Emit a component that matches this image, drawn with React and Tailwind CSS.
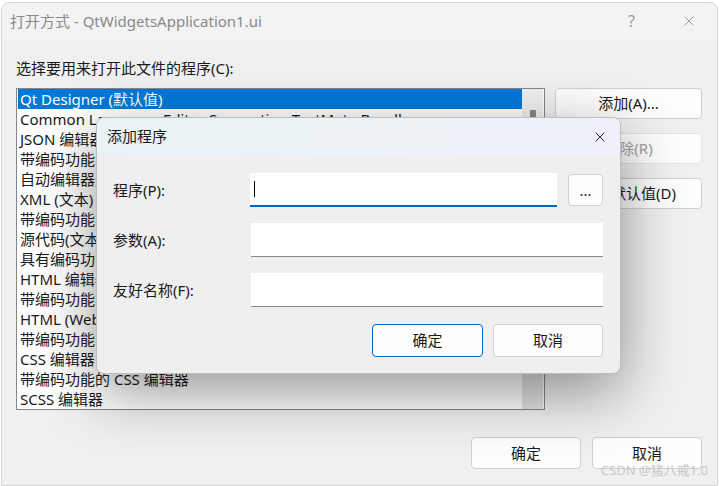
import { X } from "lucide-react";

const items = [
  "Qt Designer (默认值)",
  "Common Language Editor Supporting TextMate Bundles",
  "JSON 编辑器",
  "带编码功能的 JSON 编辑器",
  "自动编辑器选择器 (XML)",
  "XML (文本) 编辑器",
  "带编码功能的 XML (文本) 编辑器",
  "源代码(文本)编辑器",
  "具有编码功能的源代码(文本)编辑器",
  "HTML 编辑器",
  "带编码功能的 HTML 编辑器",
  "HTML (Web 窗体)编辑器",
  "带编码功能的 HTML (Web 窗体)编辑器",
  "CSS 编辑器",
  "带编码功能的 CSS 编辑器",
  "SCSS 编辑器",
];

const font = { fontFamily: '"Segoe UI", "Noto Sans", "Noto Sans CJK SC", sans-serif' };

function WinButton({ children, className = "", disabled = false, focused = false }) {
  return (
    <div
      className={`flex items-center justify-center rounded-[4px] bg-[#fdfdfd] text-[15px] ${
        focused ? "border border-[#0067c0]" : "border border-[#d0d0d0]"
      } ${disabled ? "text-[#a0a0a0] bg-[#f6f6f6] border-[#e3e3e3]" : "text-[#1a1a1a]"} ${className}`}
    >
      {children}
    </div>
  );
}

export default function App() {
  return (
    <div className="relative w-[720px] h-[486px] overflow-hidden bg-white" style={font}>
      {/* Main window */}
      <div className="mt-[2px] ml-[1px] w-[717px] h-[484px] rounded-t-[8px] border border-[#d6d6d6] bg-[#f0f0f0] flex flex-col">
        {/* Title bar */}
        <div className="h-[36px] shrink-0 flex items-center bg-[#f3f3f3] rounded-t-[8px] pl-[8px]">
          <span className="text-[15px] text-[#8a8a8a]">打开方式 - QtWidgetsApplication1.ui</span>
          <span className="ml-auto mr-[46px] text-[16px] text-[#9a9a9a]">?</span>
          <X className="w-[16px] h-[16px] text-[#8a8a8a] mr-[20px]" strokeWidth={1.2} />
        </div>

        {/* Body */}
        <div className="flex flex-col pl-[14px] pt-[19px]">
          <div className="h-[20px] leading-[20px] text-[15px] text-[#1a1a1a]">选择要用来打开此文件的程序(C):</div>

          <div className="flex mt-[10px]">
            <div className="w-[529px] h-[322px] border border-[#828790] bg-white flex px-[1px]">
              <div className="flex-1 overflow-hidden">
                {items.map((t, i) => (
                  <div
                    key={i}
                    className={`h-[20px] leading-[20px] pl-[2px] text-[15px] whitespace-nowrap ${
                      i === 0 ? "bg-[#0078d7] text-white" : "text-[#1a1a1a]"
                    }`}
                  >
                    {t}
                  </div>
                ))}
              </div>
              <div className="w-[21px] bg-[#f0f0f0] flex flex-col items-center">
                <div className="mt-[21px] w-[6px] h-[9px] bg-[#8a8a8a]" />
                <div className="mt-auto w-full h-[35px] bg-[#e3e3e3]" />
              </div>
            </div>

            <div className="ml-[10px] flex flex-col w-[147px]">
              <WinButton className="h-[31px]">添加(A)...</WinButton>
              <WinButton className="h-[31px] mt-[14px]" disabled>
                移除(R)
              </WinButton>
              <WinButton className="h-[31px] mt-[14px]">设为默认值(D)</WinButton>
            </div>
          </div>

          <div className="flex justify-end mt-[27px] pr-[15px] gap-[11px]">
            <WinButton className="w-[110px] h-[32px]">确定</WinButton>
            <WinButton className="w-[110px] h-[32px]">取消</WinButton>
          </div>
        </div>
      </div>

      {/* Overlay dialog */}
      <div className="absolute left-[96px] top-[117px] w-[525px] h-[257px] rounded-[8px] border border-[#bdbdbd] bg-[#efefef] shadow-[0_18px_60px_rgba(0,0,0,0.42)] flex flex-col overflow-hidden">
        <div className="h-[37px] shrink-0 flex items-center pl-[10px] pr-[12px] bg-gradient-to-r from-[#e9f3f5] to-[#f0f1f8]">
          <span className="text-[15px] text-[#1a1a1a]">添加程序</span>
          <X className="ml-auto w-[16px] h-[16px] text-[#1a1a1a]" strokeWidth={1.4} />
        </div>

        <div className="flex flex-col pl-[16px] pr-[17px] pt-[18px]">
          <div className="flex items-center h-[34px]">
            <span className="w-[137px] text-[15px] text-[#1a1a1a]">程序(P):</span>
            <div className="w-[307px] h-[34px] bg-white border-b-2 border-[#0067c0] flex items-center pl-[4px]">
              <div className="w-[1px] h-[16px] bg-black" />
            </div>
            <WinButton className="ml-[11px] w-[35px] h-[32px] text-[13px]">...</WinButton>
          </div>
          <div className="flex items-center h-[34px] mt-[16px]">
            <span className="w-[138px] text-[15px] text-[#1a1a1a]">参数(A):</span>
            <div className="flex-1 h-[34px] bg-white border-b border-[#8a8a8a]" />
          </div>
          <div className="flex items-center h-[34px] mt-[16px]">
            <span className="w-[138px] text-[15px] text-[#1a1a1a]">友好名称(F):</span>
            <div className="flex-1 h-[34px] bg-white border-b border-[#8a8a8a]" />
          </div>
          <div className="flex justify-end mt-[17px] gap-[10px]">
            <WinButton className="w-[111px] h-[33px]" focused>
              确定
            </WinButton>
            <WinButton className="w-[110px] h-[33px]">取消</WinButton>
          </div>
        </div>
      </div>

      {/* Watermark */}
      <div className="absolute right-[12px] bottom-[6px] text-[13px] text-[#c8c8c8]">CSDN @猪八戒1.0</div>
    </div>
  );
}
